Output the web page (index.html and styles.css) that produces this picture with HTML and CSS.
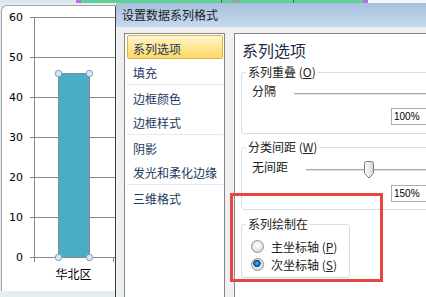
FILE: index.html
```html
<!DOCTYPE html>
<html lang="zh-CN">
<head>
    <meta charset="UTF-8">
    <meta name="viewport" content="width=device-width, initial-scale=1.0">
    <title>设置数据系列格式</title>
    <link rel="stylesheet" href="styles.css">
</head>
<body>
    <div class="strip">
        <span class="seg s-pale"></span>
        <span class="seg s-purple"></span>
        <span class="seg s-green w140"></span>
        <span class="seg s-dark"></span>
        <span class="seg s-green w11"></span>
        <span class="seg s-hatch"></span>
        <span class="seg s-green w53"></span>
        <span class="seg s-dark"></span>
        <span class="seg s-green w69"></span>
        <span class="seg s-purple"></span>
        <span class="seg s-rest"></span>
    </div>
    <div class="desk">
        <div class="chart">
            <svg class="plot" width="113" height="285" viewBox="0 0 113 285">
                <g stroke="#878787" stroke-width="1">
                    <line x1="28" y1="11.5" x2="113" y2="11.5"/>
                    <line x1="28" y1="51.5" x2="113" y2="51.5"/>
                    <line x1="28" y1="91.5" x2="113" y2="91.5"/>
                    <line x1="28" y1="131.5" x2="113" y2="131.5"/>
                    <line x1="28" y1="171.5" x2="113" y2="171.5"/>
                    <line x1="28" y1="211.5" x2="113" y2="211.5"/>
                    <line x1="28" y1="251.5" x2="113" y2="251.5"/>
                    <line x1="32.5" y1="11" x2="32.5" y2="256"/>
                    <line x1="111.5" y1="251" x2="111.5" y2="256"/>
                </g>
                <rect x="56.5" y="67.5" width="31" height="184" fill="#4bacc6" stroke="#8a8a8a"/>
                <g fill="#d7e9f6" stroke="#7f9db8">
                    <circle cx="56.5" cy="67.5" r="3.2"/>
                    <circle cx="87.5" cy="67.5" r="3.2"/>
                    <circle cx="56.5" cy="251.5" r="3.2"/>
                    <circle cx="87.5" cy="251.5" r="3.2"/>
                </g>
                <g class="ylabels" text-anchor="end">
                    <text x="21" y="15">60</text>
                    <text x="21" y="55">50</text>
                    <text x="21" y="95">40</text>
                    <text x="21" y="135">30</text>
                    <text x="21" y="175">20</text>
                    <text x="21" y="215">10</text>
                    <text x="21" y="255">0</text>
                </g>
                <text class="cat" x="71.5" y="273" text-anchor="middle">华北区</text>
            </svg>
        </div>
        <div class="dialog">
            <div class="titlebar">设置数据系列格式</div>
            <div class="dlg-body">
                <ul class="nav">
                    <li class="item active">系列选项</li>
                    <li class="item">填充</li>
                    <li class="sep"></li>
                    <li class="item">边框颜色</li>
                    <li class="item">边框样式</li>
                    <li class="sep"></li>
                    <li class="item">阴影</li>
                    <li class="item">发光和柔化边缘</li>
                    <li class="sep"></li>
                    <li class="item">三维格式</li>
                </ul>
                <div class="pane">
                    <h3 class="pane-title">系列选项</h3>
                    <fieldset class="group wide g-overlap">
                        <legend>系列重叠 (<u>O</u>)</legend>
                        <div class="slider-row">
                            <span class="s-label">分隔</span>
                            <div class="track"></div>
                        </div>
                        <div class="num">100%</div>
                    </fieldset>
                    <fieldset class="group wide g-gap">
                        <legend>分类间距 (<u>W</u>)</legend>
                        <div class="slider-row">
                            <span class="s-label">无间距</span>
                            <div class="track">
                                <svg class="thumb" width="12" height="18" viewBox="0 0 12 18">
                                    <defs>
                                        <linearGradient id="tg" x1="0" y1="0" x2="1" y2="0">
                                            <stop offset="0" stop-color="#ffffff"/>
                                            <stop offset="1" stop-color="#d4d4d4"/>
                                        </linearGradient>
                                    </defs>
                                    <path d="M1.5 2.5 Q1.5 0.5 3.5 0.5 H8.5 Q10.5 0.5 10.5 2.5 V12.5 L6 17 L1.5 12.5 Z" fill="url(#tg)" stroke="#7b7b7b"/>
                                </svg>
                            </div>
                        </div>
                        <div class="num">150%</div>
                    </fieldset>
                    <fieldset class="group g-plot">
                        <legend>系列绘制在</legend>
                        <label class="radio-row"><span class="radio"></span>主坐标轴 (<u>P</u>)</label>
                        <label class="radio-row"><span class="radio checked"></span>次坐标轴 (<u>S</u>)</label>
                    </fieldset>
                </div>
            </div>
        </div>
    </div>
    <div class="callout"></div>
</body>
</html>
```

FILE: styles.css
```css
* {
    box-sizing: border-box;
}
body {
    margin: 0;
    width: 426px;
    height: 297px;
    overflow: hidden;
    position: relative;
    background: #e1eff3;
    font-family: "Noto Sans CJK SC", sans-serif;
    font-size: 12px;
    color: #222;
}

/* strip of the sheet behind, top edge */
.strip {
    display: flex;
    height: 3px;
}
.seg { flex: none; }
.s-pale { width: 76px; background: #d9e7eb; }
.s-purple { width: 5px; background: #b76ddc; }
.s-green { background: #61cf98; }
.s-dark { width: 1px; background: #3f6b55; }
.s-hatch { width: 7px; background: #8fa69b; }
.s-rest { flex: 1; background: #f3f5f7; }
.w140 { width: 140px; }
.w11 { width: 11px; }
.w53 { width: 53px; }
.w69 { width: 69px; }

.desk {
    display: flex;
    height: 294px;
}

/* chart */
.chart {
    flex: none;
    width: 114px;
    height: 286px;
    margin: 2px 0 0 1px;
    background: #fff;
    border-left: 1px solid #a3a3a3;
    border-top: 1px solid #a3a3a3;
    border-top-left-radius: 6px;
    overflow: hidden;
}
.plot {
    display: block;
}
.ylabels text {
    font-family: "DejaVu Sans", sans-serif;
    font-size: 11px;
    fill: #000;
}
.cat {
    font-family: "Noto Sans CJK SC", sans-serif;
    font-size: 12px;
    fill: #000;
}

/* dialog */
.dialog {
    flex: 1;
    display: flex;
    flex-direction: column;
    min-width: 0;
    border-left: 1px solid #3b3b3b;
    border-top-left-radius: 5px;
    overflow: hidden;
}
.titlebar {
    height: 24px;
    line-height: 24px;
    padding-left: 6px;
    background: linear-gradient(to bottom, #a8c0dd, #c5d9ef);
    color: #1b1b1b;
}
.dlg-body {
    flex: 1;
    display: flex;
    gap: 9px;
    padding: 6px 0 0 8px;
    background: #f0f0f0;
}

.nav {
    flex: none;
    width: 101px;
    margin: 0;
    padding: 1px 0 0 0;
    list-style: none;
    background: #fff;
    border: 1px solid #82878f;
    border-bottom: none;
}
.item {
    margin: 0 1px 0 2px;
    padding: 3px 0 0 5px;
    line-height: 19px;
    border: 1px solid transparent;
    border-radius: 2px;
    color: #223a5e;
    white-space: nowrap;
}
.item.active {
    border-color: #dcb24c;
    background: linear-gradient(to bottom, #fff6d2, #ffe58f 55%, #ffd869);
}
.sep {
    height: 2px;
    margin: 0 1px 0 2px;
    border-bottom: 1px solid #e6e9f1;
}

.pane {
    flex: 1;
    min-width: 0;
    overflow: hidden;
    padding: 6px 0 0 6px;
    background: #fff;
    border-left: 1px solid #82878f;
    border-top: 1px solid #82878f;
}
.pane-title {
    margin: 0;
    padding-left: 1px;
    font-size: 16px;
    font-weight: normal;
    line-height: 20px;
    color: #1f2d4a;
}

.group {
    margin: 0;
    padding: 0 0 0 10px;
    min-width: 0;
    border: 1px solid #d5dfe6;
    border-radius: 3px;
}
.group legend {
    margin-left: -6px;
    padding: 0 2px;
    line-height: 14px;
    color: #222;
    white-space: nowrap;
}
.wide {
    width: 200px;
}
.g-overlap {
    margin-top: 5px;
    padding-bottom: 8px;
}
.g-overlap .slider-row {
    margin-top: 4px;
}
.g-overlap .num {
    margin-top: 7px;
}
.g-gap {
    margin-top: 6px;
    padding-bottom: 7px;
}
.g-gap .slider-row {
    margin-top: 5px;
}
.g-gap .num {
    margin-top: 8px;
}
.g-plot {
    width: 109px;
    margin-top: 7px;
    padding-bottom: 4px;
}

.slider-row {
    display: flex;
    height: 18px;
}
.s-label {
    line-height: 16px;
    white-space: nowrap;
}
.track {
    flex: 1;
    position: relative;
    margin-left: 18px;
    height: 18px;
    background: linear-gradient(to bottom, transparent 10px, #a6a6a6 10px, #a6a6a6 11px, #e4e4e4 11px, #e4e4e4 12px, transparent 12px);
}
.thumb {
    position: absolute;
    left: 57px;
    top: 2px;
    display: block;
}

.num {
    width: 40px;
    height: 17px;
    margin-left: 139px;
    padding-left: 2px;
    border: 1px solid #abadb3;
    font-family: "Liberation Sans", sans-serif;
    font-size: 10px;
    line-height: 15px;
    color: #000;
}

.radio-row {
    display: flex;
    align-items: center;
    height: 18px;
    white-space: nowrap;
}
.radio-row:first-of-type {
    margin-top: 6px;
}
.radio {
    flex: none;
    width: 13px;
    height: 13px;
    margin: 0 7px 0 -1px;
    border: 1px solid #8e8f8f;
    border-radius: 50%;
    background: radial-gradient(circle at 50% 40%, #ffffff 0, #e6e6e6 55%, #c9c9c9 100%);
}
.radio.checked {
    background:
        radial-gradient(circle at 45% 40%, #6cc3f5 0, #1b73c4 2px, #0b4a8c 3.5px, transparent 4px),
        radial-gradient(circle at 50% 40%, #ffffff 0, #e6e6e6 55%, #c9c9c9 100%);
}

/* red annotation box drawn over the dialog */
.callout {
    position: absolute;
    left: 230px;
    top: 193px;
    width: 153px;
    height: 89px;
    border: 3px solid #e8463d;
}
```
